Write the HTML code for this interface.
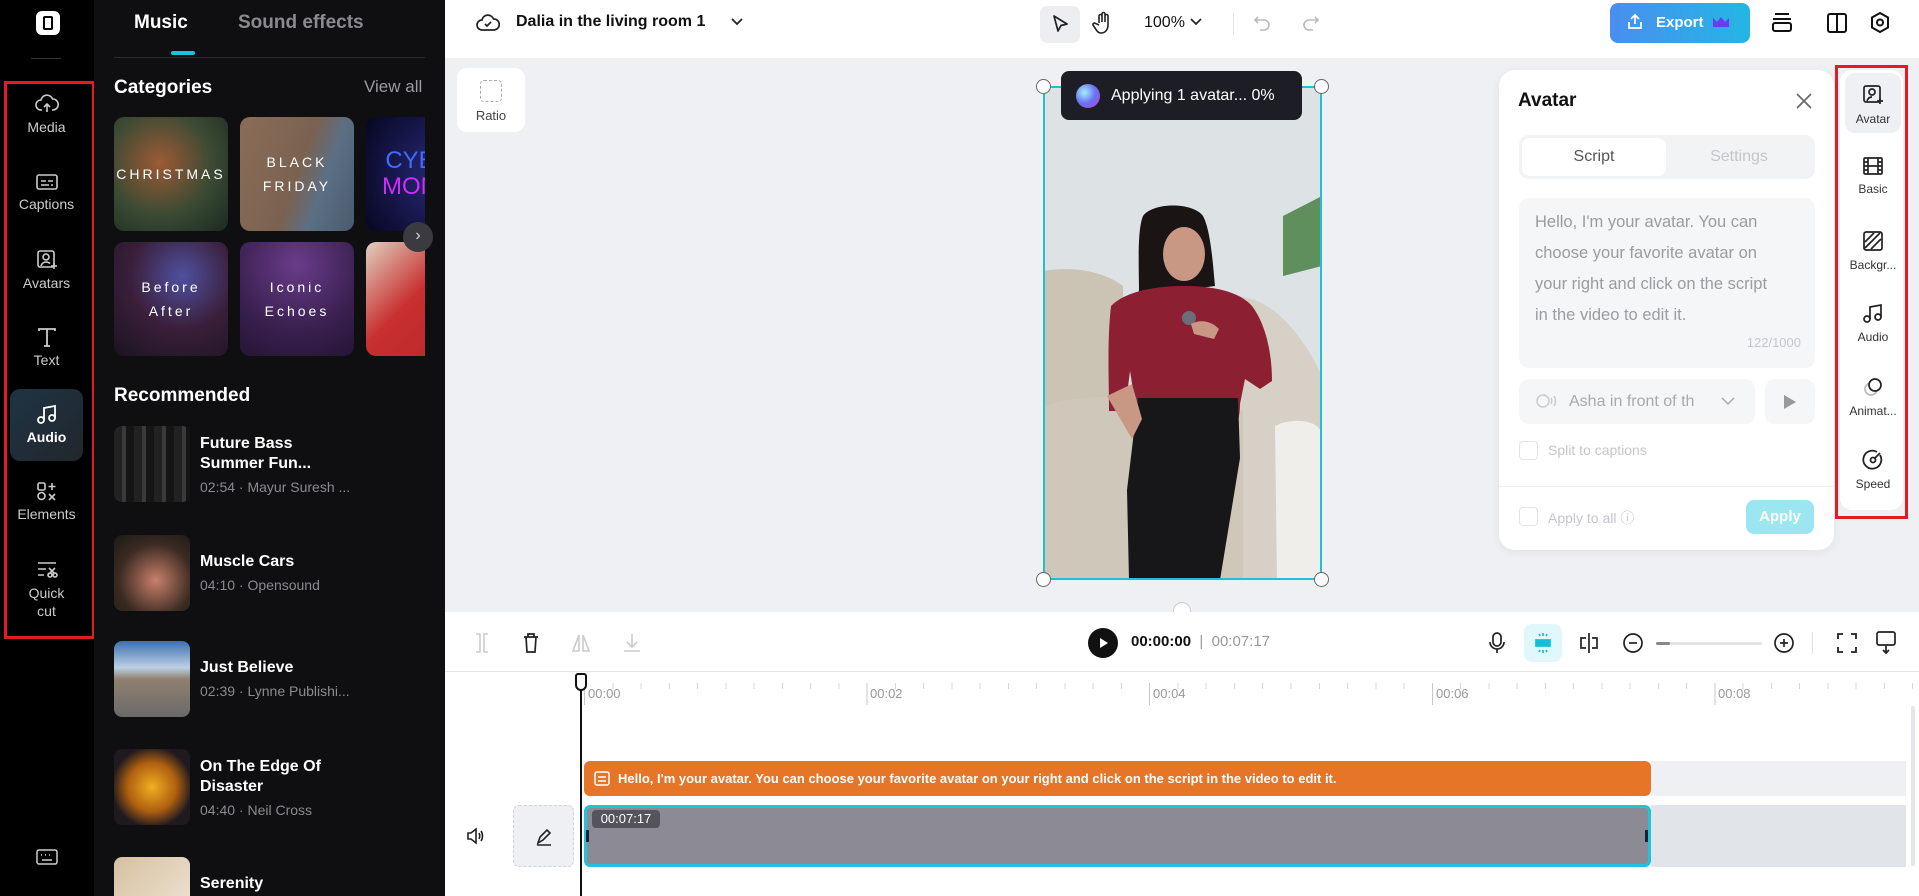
<!DOCTYPE html>
<html><head><meta charset="utf-8"><style>
*{box-sizing:border-box;margin:0;padding:0}
body{width:1919px;height:896px;overflow:hidden;font-family:"Liberation Sans",sans-serif;background:#fff;position:relative}
.abs{position:absolute}
#nav{left:0;top:0;width:94px;height:896px;background:#000}
.ni{position:absolute;left:10px;width:73px;text-align:center;color:#ccc;font-size:14px}
.ni svg{display:block;margin:0 auto 4px}
#panel{left:94px;top:0;width:351px;height:896px;background:#0f0f11;overflow:hidden}
.tile{position:absolute;width:114px;height:114px;border-radius:10px;overflow:hidden;color:#fff;font-size:14px;letter-spacing:3px;text-align:center;display:flex;align-items:center;justify-content:center;line-height:24px}
.item{position:absolute;left:20px;width:320px;height:76px}
.th{position:absolute;left:0;top:0;width:76px;height:76px;border-radius:8px}
.it{position:absolute;left:86px;color:#fff;font-size:16px;font-weight:bold;line-height:20px}
.is{color:#8a8a90;font-weight:normal;font-size:14px;margin-top:3px}
.rp{position:absolute;left:1845px;width:56px;text-align:center;font-size:12px;color:#333}
.rp svg{display:block;margin:0 auto 6px}
</style></head><body>

<!-- left nav -->
<div id="nav" class="abs">
 <div class="abs" style="left:36px;top:11px;width:24px;height:24px;background:#fff;border-radius:6px"><div class="abs" style="left:7px;top:5px;width:10px;height:14px;border:2.5px solid #000;border-radius:2px"></div></div>
 <div class="abs" style="left:31px;top:58px;width:30px;height:1px;background:#333"></div>
 <div class="abs" style="left:4px;top:81px;width:91px;height:558px;border:3px solid #e31b23"></div>
 <div class="ni" style="top:93px"><svg width="24" height="22" viewBox="0 0 24 22" fill="none" stroke="#ccc" stroke-width="1.6"><path d="M7 17H6a5 5 0 0 1 0-10 6 6 0 0 1 11.5-1A4.5 4.5 0 0 1 18 17h-1M12 19v-8M9 14l3-3 3 3"/></svg>Media</div>
 <div class="ni" style="top:172px"><svg width="24" height="20" viewBox="0 0 24 20" fill="none" stroke="#ccc" stroke-width="1.6"><rect x="2" y="3" width="20" height="14" rx="2"/><path d="M6 9h5M13 9h5M6 13h8M16 13h2"/></svg>Captions</div>
 <div class="ni" style="top:249px"><svg width="24" height="22" viewBox="0 0 24 22" fill="none" stroke="#ccc" stroke-width="1.6"><rect x="3" y="2" width="16" height="16" rx="2"/><circle cx="11" cy="8" r="3"/><path d="M6 17c1-3 3-4 5-4s3 .5 4 1.5M19 14v6M16 17h6"/></svg>Avatars</div>
 <div class="ni" style="top:326px"><svg width="24" height="22" viewBox="0 0 24 22" fill="none" stroke="#ccc" stroke-width="1.8"><path d="M4 5V3h16v2M12 3v17M9 20h6"/></svg>Text</div>
 <div class="abs" style="left:10px;top:389px;width:73px;height:72px;border-radius:10px;background:linear-gradient(135deg,#1e3444,#22262c)"></div>
 <div class="ni" style="top:403px;color:#fff;font-weight:bold"><svg width="24" height="22" viewBox="0 0 24 22" fill="none" stroke="#fff" stroke-width="1.8"><circle cx="6" cy="17" r="3"/><circle cx="17" cy="15" r="3"/><path d="M9 17V5l11-2v12"/></svg>Audio</div>
 <div class="ni" style="top:480px"><svg width="24" height="22" viewBox="0 0 24 22" fill="none" stroke="#ccc" stroke-width="1.6"><rect x="3" y="3" width="7" height="7" rx="1.5"/><circle cx="6.5" cy="16" r="3.5"/><path d="M17 3v7M13.5 6.5h7M14 14l6 6M20 14l-6 6"/></svg>Elements</div>
 <div class="ni" style="top:558px;line-height:18px"><svg width="24" height="22" viewBox="0 0 24 22" fill="none" stroke="#ccc" stroke-width="1.6"><path d="M3 5h18M3 11h8M3 17h6"/><circle cx="15" cy="17" r="2"/><circle cx="20" cy="17" r="2"/><path d="M14 10l6 6M20 10l-6 6"/></svg>Quick<br>cut</div>
 <svg class="abs" style="left:36px;top:848px" width="22" height="18" viewBox="0 0 22 18" fill="none" stroke="#ccc" stroke-width="1.5"><rect x="1" y="2" width="20" height="14" rx="2"/><path d="M5 7h1M9 7h1M13 7h1M17 7h0M6 12h10"/></svg>
</div>

<!-- music panel -->
<div id="panel" class="abs">
 <div class="abs" style="left:40px;top:12px;color:#fff;font-weight:bold;font-size:19px">Music</div>
 <div class="abs" style="left:144px;top:12px;color:#8a8a90;font-weight:bold;font-size:19px">Sound effects</div>
 <div class="abs" style="left:77px;top:51px;width:24px;height:4px;background:#15c4dc;border-radius:2px"></div>
 <div class="abs" style="left:20px;top:57px;width:311px;height:1px;background:#2a2a2e"></div>
 <div class="abs" style="left:20px;top:77px;color:#fff;font-weight:bold;font-size:19px">Categories</div>
 <div class="abs" style="left:270px;top:77px;color:#9a9aa0;font-size:17px">View all</div>
 <div class="abs" style="left:20px;top:117px;width:311px;height:240px;overflow:hidden">
 <div class="tile" style="left:0;top:0;background:radial-gradient(circle at 40% 40%,#9c5a36,#3a4a34 55%,#1b2a20)">CHRISTMAS</div>
 <div class="tile" style="left:126px;top:0;background:linear-gradient(110deg,#8a6d58 0%,#7b6250 50%,#5b6f84 70%,#4a5a6c)">BLACK<br>FRIDAY</div>
 <div class="tile" style="left:252px;top:0;background:radial-gradient(circle at 70% 50%,#2a2a80,#070720);color:#3d6cff;font-size:24px;letter-spacing:0;justify-content:flex-start;padding-left:16px;line-height:26px"><span>CYB<br><span style="color:#d02cff">MON</span></span></div>
 <div class="tile" style="left:0;top:125px;background:radial-gradient(circle at 60% 30%,#5050a0,#3a1f3a 50%,#1a1420)">Before<br>After</div>
 <div class="tile" style="left:126px;top:125px;background:radial-gradient(circle at 50% 20%,#6a3c8a,#3a2050 60%,#251535)">Iconic<br>Echoes</div>
 <div class="tile" style="left:252px;top:125px;background:linear-gradient(135deg,#e0d0c0,#c83030 45%,#b92525)"></div>
 </div>
 <div class="abs" style="left:309px;top:222px;width:30px;height:30px;border-radius:50%;background:#3a3a40;color:#ddd;text-align:center;line-height:28px;font-size:16px">›</div>
 <div class="abs" style="left:20px;top:385px;color:#fff;font-weight:bold;font-size:19px">Recommended</div>
 <div class="item" style="top:426px"><div class="th" style="background:repeating-linear-gradient(90deg,#222 0 8px,#3a3a3a 8px 12px,#151515 12px 20px)"></div><div class="it" style="top:8px">Future Bass<br>Summer Fun...<div class="is">02:54 · Mayur Suresh ...</div></div></div>
 <div class="item" style="top:535px"><div class="th" style="background:radial-gradient(circle at 55% 60%,#c8806a,#3a2a22 60%,#1a1a14)"></div><div class="it" style="top:17px">Muscle Cars<div class="is">04:10 · Opensound</div></div></div>
 <div class="item" style="top:641px"><div class="th" style="background:linear-gradient(180deg,#3a70b0 0%,#bcd0e4 35%,#908070 50%,#6a6a6a 100%)"></div><div class="it" style="top:17px">Just Believe<div class="is">02:39 · Lynne Publishi...</div></div></div>
 <div class="item" style="top:749px"><div class="th" style="background:radial-gradient(ellipse at 50% 50%,#f0b020,#b06010 45%,#201a20 75%)"></div><div class="it" style="top:8px">On The Edge Of<br>Disaster<div class="is">04:40 · Neil Cross</div></div></div>
 <div class="item" style="top:857px"><div class="th" style="background:linear-gradient(135deg,#d8c0a0,#f0e8dc)"></div><div class="it" style="top:17px">Serenity</div></div>
</div>
<div class="abs" style="left:445px;top:412px;width:8px;height:64px;background:#2a2a2e;border-radius:0 8px 8px 0"></div>

<!-- top bar -->
<div class="abs" style="left:445px;top:0;width:1474px;height:58px;background:#fff"></div>
<svg class="abs" style="left:476px;top:12px" width="24" height="22" viewBox="0 0 24 22" fill="none" stroke="#222" stroke-width="1.7"><path d="M7 18H6a5 5 0 0 1 0-10 6 6 0 0 1 11.5-1A4.5 4.5 0 0 1 18 18H7z"/><path d="M9 12l2 2 4-4"/></svg>
<div class="abs" style="left:516px;top:13px;font-size:16px;font-weight:bold;color:#111">Dalia in the living room 1</div>
<svg class="abs" style="left:730px;top:17px" width="14" height="10" viewBox="0 0 14 10" fill="none" stroke="#222" stroke-width="1.8"><path d="M2 2l5 5 5-5"/></svg>
<div class="abs" style="left:1040px;top:6px;width:40px;height:37px;background:#eceef1;border-radius:7px"></div>
<svg class="abs" style="left:1049px;top:13px" width="22" height="22" viewBox="0 0 22 22" fill="none" stroke="#222" stroke-width="1.7"><path d="M5 3l13 8-6 1.5L9 18z" stroke-linejoin="round"/></svg>
<svg class="abs" style="left:1092px;top:11px" width="22" height="24" viewBox="0 0 22 24" fill="none" stroke="#222" stroke-width="1.6"><path d="M7 12V5a1.5 1.5 0 0 1 3 0v6V3a1.5 1.5 0 0 1 3 0v8V5a1.5 1.5 0 0 1 3 0v9c0 5-3 8-7 8-3 0-4-2-6-5l-2-3a1.5 1.5 0 0 1 2.5-1.5L7 14"/></svg>
<div class="abs" style="left:1144px;top:14px;font-size:16px;color:#111">100%</div>
<svg class="abs" style="left:1190px;top:18px" width="12" height="8" viewBox="0 0 12 8" fill="none" stroke="#222" stroke-width="1.7"><path d="M1 1l5 5 5-5"/></svg>
<div class="abs" style="left:1233px;top:13px;width:1px;height:22px;background:#e2e2e2"></div>
<svg class="abs" style="left:1252px;top:13px" width="20" height="20" viewBox="0 0 20 20" fill="none" stroke="#bbb" stroke-width="1.6"><path d="M6 4L3 7l3 3M3 7h9a5 5 0 0 1 0 10H8"/></svg>
<svg class="abs" style="left:1301px;top:13px" width="20" height="20" viewBox="0 0 20 20" fill="none" stroke="#bbb" stroke-width="1.6"><path d="M14 4l3 3-3 3M17 7H8a5 5 0 0 0 0 10h4"/></svg>
<div class="abs" style="left:1610px;top:3px;width:140px;height:40px;border-radius:8px;background:linear-gradient(90deg,#4a8ef0,#24b6e4);color:#fff;font-weight:bold;font-size:15px;line-height:40px;padding-left:46px">Export</div>
<svg class="abs" style="left:1626px;top:13px" width="18" height="18" viewBox="0 0 18 18" fill="none" stroke="#fff" stroke-width="1.7"><path d="M9 11V2M5 6l4-4 4 4M3 9v6h12V9"/></svg>
<svg class="abs" style="left:1712px;top:16px" width="18" height="12" viewBox="0 0 18 12"><path d="M1 2l4 4 4-5 4 5 4-4v9H1z" fill="#6a3cf0"/></svg>
<svg class="abs" style="left:1770px;top:11px" width="24" height="24" viewBox="0 0 24 24" fill="none" stroke="#111" stroke-width="2"><path d="M5 3h14M3 8h18"/><rect x="3" y="12" width="18" height="8" rx="2"/></svg>
<svg class="abs" style="left:1826px;top:12px" width="22" height="22" viewBox="0 0 22 22" fill="none" stroke="#111" stroke-width="2"><rect x="2" y="2" width="18" height="18" rx="2"/><path d="M11 2v18"/></svg>
<svg class="abs" style="left:1869px;top:11px" width="22" height="24" viewBox="0 0 22 24" fill="none" stroke="#111" stroke-width="2"><path d="M11 2l8 4.5v10L11 21l-8-4.5v-10z"/><circle cx="11" cy="11.5" r="3"/></svg>

<!-- canvas -->
<div class="abs" style="left:445px;top:58px;width:1474px;height:554px;background:#eef0f3"></div>
<div class="abs" style="left:457px;top:68px;width:68px;height:64px;background:#fff;border-radius:10px;text-align:center;font-size:13px;color:#444;padding-top:12px"><div style="width:22px;height:22px;border:1.5px dashed #aaa;border-radius:4px;margin:0 auto 6px"></div>Ratio</div>

<svg class="abs" style="left:1043px;top:86px" width="279" height="494" viewBox="0 0 279 494">
 <rect width="279" height="494" fill="#dde2e4"/>
 <path d="M240 130l39-20v70l-39 10z" fill="#3e7a3a" opacity=".8"/>
 <path d="M0 185c30-5 60 0 80 15v294H0z" fill="#cbc3b4"/>
 <path d="M190 210c40 0 70 40 89 80v204H180z" fill="#d6d0c6"/>
 <path d="M0 320c50-15 100-10 200 5v169H0z" fill="#cfc8ba"/>
 <path d="M232 340c20-10 47-5 47 10v144h-45z" fill="#f0eeea"/>
 <path d="M100 130c10-14 50-14 60 0 8 15 10 50 12 70l-76 10c0-30-2-65 4-80z" fill="#1a1414"/>
 <ellipse cx="141" cy="168" rx="21" ry="27" fill="#c99884"/>
 <path d="M68 220c15-15 45-20 73-20s55 5 68 20c15 20 20 50 20 75l-12 8-15-10-5 25c0 10-2 17-2 17H95l-8-50-5 40H66c0-30-2-70 2-105z" fill="#8d1f33"/>
 <path d="M95 312h100l2 60-20 122H86l-2-90z" fill="#17171a"/>
 <circle cx="146" cy="232" r="7" fill="#6a6e78"/>
 <path d="M148 238c10-5 20-3 28 5l-5 10-20-5z" fill="#c99884"/>
 <path d="M64 310l25-12 10 35-10 20z" fill="#c99884"/>
</svg>
<div class="abs" style="left:1043px;top:86px;width:279px;height:494px;border:2px solid #1fc0d6"></div>
<div class="abs" style="left:1036px;top:79px;width:15px;height:15px;border-radius:50%;background:#fff;border:1px solid #666"></div>
<div class="abs" style="left:1314px;top:79px;width:15px;height:15px;border-radius:50%;background:#fff;border:1px solid #666"></div>
<div class="abs" style="left:1036px;top:572px;width:15px;height:15px;border-radius:50%;background:#fff;border:1px solid #666"></div>
<div class="abs" style="left:1314px;top:572px;width:15px;height:15px;border-radius:50%;background:#fff;border:1px solid #666"></div>
<div class="abs" style="left:1061px;top:71px;width:241px;height:49px;background:#1d1d26;border-radius:8px;color:#fff;font-size:16px;line-height:49px;padding-left:50px">Applying 1 avatar... 0%</div>
<div class="abs" style="left:1076px;top:84px;width:24px;height:24px;border-radius:50%;background:radial-gradient(circle at 35% 35%,#a0f0ff,#6a70f0 50%,#c040e0)"></div>
<div class="abs" style="left:1173px;top:602px;width:18px;height:18px;border-radius:50%;background:#fff;border:1px solid #ccc"></div>

<!-- avatar card -->
<div class="abs" style="left:1499px;top:70px;width:335px;height:480px;background:#fff;border-radius:16px;box-shadow:0 2px 10px rgba(0,0,0,.06)">
 <div class="abs" style="left:19px;top:20px;font-size:19px;font-weight:bold;color:#111">Avatar</div>
 <svg class="abs" style="left:296px;top:22px" width="18" height="18" viewBox="0 0 18 18" stroke="#666" stroke-width="1.6"><path d="M2 2l14 14M16 2L2 16"/></svg>
 <div class="abs" style="left:20px;top:65px;width:296px;height:44px;background:#f2f3f5;border-radius:10px"></div>
 <div class="abs" style="left:23px;top:68px;width:144px;height:38px;background:#fff;border-radius:8px;text-align:center;line-height:38px;font-size:16px;color:#555">Script</div>
 <div class="abs" style="left:167px;top:68px;width:146px;text-align:center;line-height:38px;font-size:16px;color:#c4c6cc">Settings</div>
 <div class="abs" style="left:20px;top:128px;width:296px;height:170px;background:#f5f6f8;border-radius:10px;padding:9px 35px 0 16px;font-size:16.5px;line-height:31px;color:#9a9ca2">Hello, I'm your avatar. You can choose your favorite avatar on your right and click on the script in the video to edit it.<div class="abs" style="right:14px;bottom:10px;font-size:13px;color:#c4c6cc">122/1000</div></div>
 <div class="abs" style="left:20px;top:309px;width:236px;height:45px;background:#f5f6f8;border-radius:10px;font-size:16px;color:#a8aab0;line-height:45px;padding-left:50px">Asha in front of th</div>
 <svg class="abs" style="left:36px;top:322px" width="22" height="20" viewBox="0 0 22 20" fill="none" stroke="#ccc" stroke-width="1.5"><circle cx="8" cy="9" r="6"/><path d="M16 6c1 2 1 4 0 6M19 4c2 3 2 7 0 10"/></svg>
 <svg class="abs" style="left:222px;top:327px" width="14" height="9" viewBox="0 0 14 9" fill="none" stroke="#aaa" stroke-width="1.5"><path d="M1 1l6 6 6-6"/></svg>
 <div class="abs" style="left:266px;top:309px;width:50px;height:45px;background:#f5f6f8;border-radius:10px"></div>
 <svg class="abs" style="left:284px;top:324px" width="14" height="16" viewBox="0 0 14 16"><path d="M1 1l12 7-12 7z" fill="#999"/></svg>
 <div class="abs" style="left:20px;top:371px;width:19px;height:19px;border:1px solid #e4e4e8;border-radius:4px"></div>
 <div class="abs" style="left:49px;top:372px;font-size:14px;color:#c4c6cc">Split to captions</div>
 <div class="abs" style="left:0;top:416px;width:335px;height:1px;background:#eee"></div>
 <div class="abs" style="left:20px;top:437px;width:19px;height:19px;border:1px solid #e4e4e8;border-radius:4px"></div>
 <div class="abs" style="left:49px;top:438px;font-size:14px;color:#c4c6cc">Apply to all ⓘ</div>
 <div class="abs" style="left:247px;top:430px;width:68px;height:34px;border-radius:8px;background:#9be6f0;color:#fff;font-weight:bold;font-size:15px;text-align:center;line-height:34px">Apply</div>
</div>

<!-- right tool panel -->
<div class="abs" style="left:1840px;top:70px;width:63px;height:440px;background:#fff;border-radius:12px"></div>
<div class="abs" style="left:1845px;top:73px;width:56px;height:60px;background:#eef0f3;border-radius:10px"></div>
<div class="abs" style="left:1835px;top:65px;width:73px;height:454px;border:3px solid #e31b23"></div>
<div class="rp" style="top:84px"><svg width="22" height="22" viewBox="0 0 22 22" fill="none" stroke="#222" stroke-width="1.7"><rect x="2" y="2" width="16" height="16" rx="2"/><circle cx="10" cy="8" r="3"/><path d="M5 17c1-3 3-4 5-4M18 14v6M15 17h6"/></svg>Avatar</div>
<div class="rp" style="top:156px"><svg width="22" height="20" viewBox="0 0 22 20" fill="none" stroke="#222" stroke-width="1.7"><rect x="2" y="2" width="18" height="16" rx="1"/><path d="M6 2v16M16 2v16M2 10h18M2 6h4M2 14h4M16 6h4M16 14h4"/></svg>Basic</div>
<div class="rp" style="top:230px"><svg width="22" height="22" viewBox="0 0 22 22" fill="none" stroke="#222" stroke-width="1.7"><rect x="2" y="2" width="18" height="18" rx="2"/><path d="M3 12l9-9M3 18L18 3M9 19l10-10"/></svg>Backgr...</div>
<div class="rp" style="top:302px"><svg width="22" height="22" viewBox="0 0 22 22" fill="none" stroke="#222" stroke-width="1.7"><circle cx="5" cy="17" r="3"/><circle cx="16" cy="15" r="3"/><path d="M8 17V5l11-2v12"/></svg>Audio</div>
<div class="rp" style="top:376px"><svg width="22" height="22" viewBox="0 0 22 22" fill="none" stroke-width="1.7"><circle cx="9" cy="13" r="6" stroke="#bbb"/><circle cx="13" cy="9" r="6" stroke="#222" fill="#fff"/></svg>Animat...</div>
<div class="rp" style="top:449px"><svg width="22" height="22" viewBox="0 0 22 22" fill="none" stroke="#222" stroke-width="1.8"><path d="M18 6a9 9 0 1 1-3-3"/><circle cx="11" cy="11" r="2.5"/><path d="M13 9l5-5"/></svg>Speed</div>

<!-- timeline toolbar -->
<div class="abs" style="left:445px;top:612px;width:1474px;height:60px;background:#fff;border-bottom:1px solid #e6e6e8"></div>
<svg class="abs" style="left:474px;top:632px" width="16" height="22" viewBox="0 0 16 22" fill="none" stroke="#ccc" stroke-width="1.6"><path d="M2 2h4v18H2M14 2h-4v18h4"/></svg>
<svg class="abs" style="left:522px;top:632px" width="18" height="22" viewBox="0 0 18 22" fill="none" stroke="#222" stroke-width="1.7"><path d="M2 5h14M6 5V2h6v3M4 5l1 15h8l1-15"/></svg>
<svg class="abs" style="left:571px;top:632px" width="20" height="22" viewBox="0 0 20 22" fill="none" stroke="#ccc" stroke-width="1.6"><path d="M8 3L2 19h6zM12 3l6 16h-6z"/></svg>
<svg class="abs" style="left:622px;top:632px" width="20" height="22" viewBox="0 0 20 22" fill="none" stroke="#ccc" stroke-width="1.6"><path d="M10 2v13M5 10l5 5 5-5M2 19h16"/></svg>
<div class="abs" style="left:1088px;top:628px;width:30px;height:30px;border-radius:50%;background:#111"></div>
<svg class="abs" style="left:1099px;top:637px" width="10" height="12" viewBox="0 0 10 12"><path d="M1 1l8 5-8 5z" fill="#fff"/></svg>
<div class="abs" style="left:1131px;top:633px;font-size:15px;font-weight:bold;color:#111">00:00:00 <span style="font-weight:normal;color:#999">&nbsp;|&nbsp; 00:07:17</span></div>
<svg class="abs" style="left:1488px;top:631px" width="18" height="24" viewBox="0 0 18 24" fill="none" stroke="#222" stroke-width="1.7"><rect x="5" y="2" width="8" height="13" rx="4"/><path d="M2 11a7 7 0 0 0 14 0M9 18v4"/></svg>
<div class="abs" style="left:1524px;top:624px;width:38px;height:38px;background:#e0f8fb;border-radius:8px"></div>
<svg class="abs" style="left:1531px;top:631px" width="24" height="24" viewBox="0 0 24 24" fill="none" stroke="#12bfd8" stroke-width="1.7"><rect x="5" y="9" width="14" height="6" fill="#12bfd8"/><path d="M12 2v3M8 3l1 2M16 3l-1 2M12 19v3M8 21l1-2M16 21l-1-2"/></svg>
<svg class="abs" style="left:1578px;top:631px" width="22" height="24" viewBox="0 0 22 24" fill="none" stroke="#222" stroke-width="1.7"><path d="M11 2v20M8 7H3v10h5M14 7h5v10h-5"/></svg>
<svg class="abs" style="left:1622px;top:632px" width="22" height="22" viewBox="0 0 22 22" fill="none" stroke="#222" stroke-width="1.7"><circle cx="11" cy="11" r="9"/><path d="M7 11h8"/></svg>
<div class="abs" style="left:1656px;top:642px;width:106px;height:3px;background:#e2e4e8;border-radius:2px"></div>
<div class="abs" style="left:1656px;top:642px;width:14px;height:3px;background:#888;border-radius:2px"></div>
<svg class="abs" style="left:1773px;top:632px" width="22" height="22" viewBox="0 0 22 22" fill="none" stroke="#222" stroke-width="1.7"><circle cx="11" cy="11" r="9"/><path d="M7 11h8M11 7v8"/></svg>
<div class="abs" style="left:1812px;top:632px;width:1px;height:22px;background:#e2e2e2"></div>
<svg class="abs" style="left:1836px;top:632px" width="22" height="22" viewBox="0 0 22 22" fill="none" stroke="#222" stroke-width="1.8"><path d="M2 7V2h5M15 2h5v5M20 15v5h-5M7 20H2v-5"/></svg>
<svg class="abs" style="left:1875px;top:630px" width="22" height="26" viewBox="0 0 22 26" fill="none" stroke="#222" stroke-width="1.7"><rect x="2" y="2" width="18" height="13" rx="2"/><path d="M11 15v7M8 20l3 3 3-3"/></svg>

<!-- ruler -->
<div class="abs" style="left:584px;top:683px;width:1330px;height:6px;background:repeating-linear-gradient(90deg,#d6d6d8 0 1px,transparent 1px 28.26px)"></div>
<div class="abs" style="left:584px;top:683px;width:1330px;height:22px;background:repeating-linear-gradient(90deg,#c8c8cc 0 1px,transparent 1px 282.6px)"></div>
<div class="abs" style="top:686px;left:588px;font-size:13px;color:#999">00:00</div>
<div class="abs" style="top:686px;left:870px;font-size:13px;color:#999">00:02</div>
<div class="abs" style="top:686px;left:1153px;font-size:13px;color:#999">00:04</div>
<div class="abs" style="top:686px;left:1436px;font-size:13px;color:#999">00:06</div>
<div class="abs" style="top:686px;left:1718px;font-size:13px;color:#999">00:08</div>

<!-- tracks -->
<div class="abs" style="left:1651px;top:761px;width:255px;height:35px;background:#eef0f3"></div>
<div class="abs" style="left:584px;top:761px;width:1067px;height:35px;background:#e77528;border-radius:6px;color:#fff;font-size:13px;font-weight:bold;line-height:35px;padding-left:34px">Hello, I'm your avatar. You can choose your favorite avatar on your right and click on the script in the video to edit it.</div>
<svg class="abs" style="left:594px;top:771px" width="16" height="15" viewBox="0 0 16 15" fill="none" stroke="#fff" stroke-width="1.5"><rect x="1" y="1" width="14" height="13" rx="2"/><path d="M4 6h8M4 10h8"/></svg>
<div class="abs" style="left:1651px;top:805px;width:255px;height:62px;background:#e1e4e8"></div>
<div class="abs" style="left:584px;top:805px;width:1067px;height:62px;background:#8c8b95;border:3px solid #1fc4da;border-radius:6px"></div>
<div class="abs" style="left:592px;top:810px;width:68px;height:18px;background:#55545c;border-radius:4px;color:#fff;font-size:13px;text-align:center;line-height:18px">00:07:17</div>
<div class="abs" style="left:586px;top:830px;width:3px;height:12px;background:#123"></div>
<div class="abs" style="left:1645px;top:830px;width:3px;height:12px;background:#123"></div>
<svg class="abs" style="left:465px;top:826px" width="20" height="20" viewBox="0 0 20 20" fill="none" stroke="#222" stroke-width="1.6"><path d="M3 7h3l5-4v14l-5-4H3zM14 7c1 2 1 4 0 6M16 5c2 3 2 7 0 10"/></svg>
<div class="abs" style="left:513px;top:805px;width:61px;height:62px;background:#eef0f3;border:1px dashed #d0d2d6;border-radius:6px"></div>
<svg class="abs" style="left:534px;top:827px" width="20" height="20" viewBox="0 0 20 20" fill="none" stroke="#222" stroke-width="1.6"><path d="M4 16l2-6 7-7 3 3-7 7zM3 18h14"/></svg>
<!-- playhead -->
<div class="abs" style="left:580px;top:678px;width:2px;height:218px;background:#111"></div>
<div class="abs" style="left:575px;top:673px;width:12px;height:18px;background:#fff;border:2px solid #111;border-radius:3px 3px 6px 6px"></div>
<div class="abs" style="left:1911px;top:706px;width:4px;height:160px;background:#e4e6ea;border-radius:2px"></div>
</body></html>
